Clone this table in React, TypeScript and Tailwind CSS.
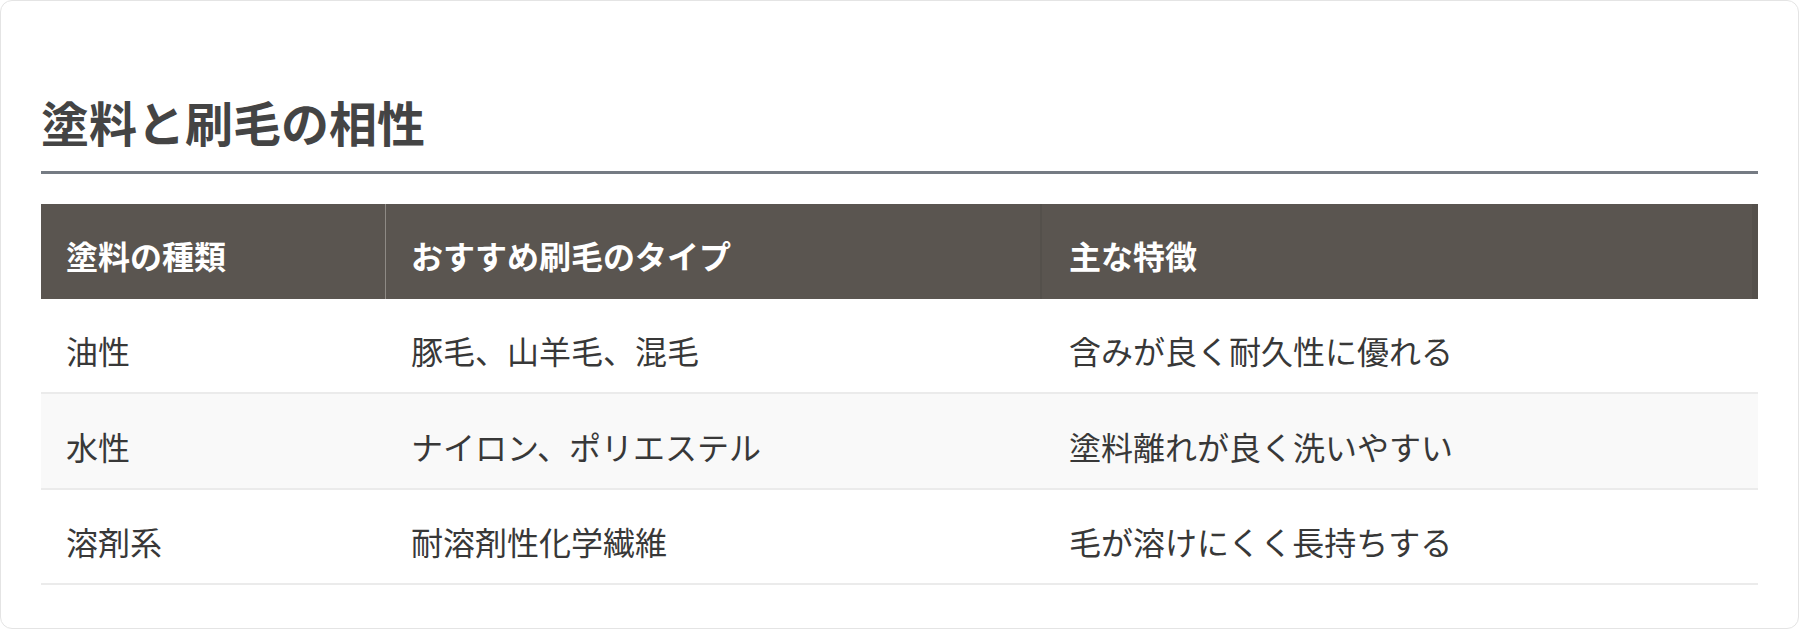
import React from "react";

const rows = [
  ["油性", "豚毛、山羊毛、混毛", "含みが良く耐久性に優れる"],
  ["水性", "ナイロン、ポリエステル", "塗料離れが良く洗いやすい"],
  ["溶剤系", "耐溶剤性化学繊維", "毛が溶けにくく長持ちする"],
];

export default function App() {
  return (
    <div
      className="w-[1800px] h-[630px] bg-white"
      style={{ fontFamily: '"Noto Sans CJK JP", "Noto Sans", sans-serif' }}
    >
      <div className="w-[1799px] h-[629px] border border-[#e4e4e4] rounded-[12px] bg-white px-[40px] pt-[40px]">
        <h2 className="mt-[44px] text-[48px] leading-[72px] font-bold text-[#444444] pb-[14px] border-b-[3px] border-[#757b83]">
          塗料と刷毛の相性
        </h2>
        <div className="mt-[30px]">
          <div className="grid grid-cols-[345px_656px_1fr] h-[95px] bg-[#5a5550] text-white font-bold text-[32px]">
            <div className="flex items-center pl-[25px] pt-[6px] border-r border-[#8e8a85]">塗料の種類</div>
            <div className="flex items-center pl-[25px] pt-[6px] border-r-2 border-[#54504b]">おすすめ刷毛のタイプ</div>
            <div className="flex items-center pl-[27px] pt-[6px] border-r-[6px] border-[#54504b]">主な特徴</div>
          </div>
          {rows.map((r, i) => (
            <div
              key={i}
              className={
                i % 2 === 1
                  ? "grid grid-cols-[345px_656px_1fr] h-[96px] bg-[#f9f9f9] border-b-2 border-[#ebebeb] text-[#383838] text-[32px]"
                  : "grid grid-cols-[345px_656px_1fr] h-[95px] bg-white border-b-2 border-[#ebebeb] text-[#383838] text-[32px]"
              }
            >
              <div className="flex items-center pl-[25px] pt-[9px]">{r[0]}</div>
              <div className="flex items-center pl-[25px] pt-[9px]">{r[1]}</div>
              <div className="flex items-center pl-[27px] pt-[9px]">{r[2]}</div>
            </div>
          ))}
        </div>
      </div>
    </div>
  );
}
